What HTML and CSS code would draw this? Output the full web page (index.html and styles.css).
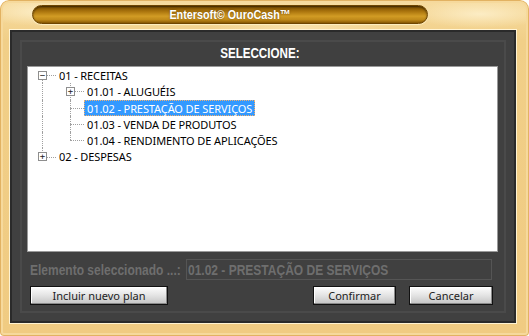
FILE: index.html
```html
<!DOCTYPE html>
<html lang="pt">
<head>
    <meta charset="UTF-8">
    <title>Entersoft© OuroCash™</title>
    <link rel="stylesheet" href="styles.css">
</head>
<body>
    <div class="window">
        <div class="titlebar"><span class="narrow">Entersoft© OuroCash™</span></div>

        <div class="panel">
            <div class="group">
                <div class="heading"><span class="narrow">SELECCIONE:</span></div>

                <div class="tree">
                    <div class="row">
                        <span class="cell first"><span class="exp">&minus;</span></span>
                        <span class="label">01 - RECEITAS</span>
                    </div>
                    <div class="row">
                        <span class="cell pipe"></span>
                        <span class="cell tee"><span class="exp">+</span></span>
                        <span class="label">01.01 - ALUGUÉIS</span>
                    </div>
                    <div class="row">
                        <span class="cell pipe"></span>
                        <span class="cell tee"></span>
                        <span class="label selected">01.02 - PRESTAÇÃO DE SERVIÇOS</span>
                    </div>
                    <div class="row">
                        <span class="cell pipe"></span>
                        <span class="cell tee"></span>
                        <span class="label">01.03 - VENDA DE PRODUTOS</span>
                    </div>
                    <div class="row">
                        <span class="cell pipe"></span>
                        <span class="cell elbow"></span>
                        <span class="label">01.04 - RENDIMENTO DE APLICAÇÕES</span>
                    </div>
                    <div class="row">
                        <span class="cell elbow"><span class="exp">+</span></span>
                        <span class="label">02 - DESPESAS</span>
                    </div>
                </div>

                <div class="selected-row">
                    <div class="sel-label"><span class="narrow">Elemento seleccionado ...:</span></div>
                    <div class="sel-value"><span class="narrow">01.02 - PRESTAÇÃO DE SERVIÇOS</span></div>
                </div>

                <div class="actions">
                    <button class="btn btn-wide">Incluir nuevo plan</button>
                    <span class="spacer"></span>
                    <button class="btn">Confirmar</button>
                    <button class="btn">Cancelar</button>
                </div>
            </div>
        </div>
    </div>
</body>
</html>
```

FILE: styles.css
```css
body {
    margin: 0;
    background: #fff;
}
/* condensed look of the original skin font */
.narrow {
    display: inline-block;
    transform: scaleX(0.83);
    white-space: nowrap;
}
.window {
    width: 529px;
    height: 336px;
    box-sizing: border-box;
    padding: 5px 0 0 10px;
    border-radius: 9px 9px 4px 4px;
    background:
        radial-gradient(ellipse 60px 14px at 40px 12px, rgba(255, 245, 215, 0.7), transparent),
        radial-gradient(ellipse 70px 14px at 480px 14px, rgba(255, 245, 215, 0.7), transparent),
        radial-gradient(ellipse 90px 10px at 300px 28px, rgba(255, 240, 200, 0.5), transparent),
        linear-gradient(#f7dca0, #f1cf88 40px, #f0cb82);
    box-shadow: inset 0 0 0 1px #e2b262, inset 0 0 0 3px #f6d99c;
}
.titlebar {
    width: 396px;
    height: 19px;
    box-sizing: border-box;
    margin-left: 22px;
    border: 1px solid #6e4500;
    border-radius: 10px;
    background: linear-gradient(#744900, #a8720c 30%, #d29c24 60%, #c08a1a 80%, #8a5a04);
    box-shadow: 0 1px 1px #fff0c4, inset 0 1px 2px rgba(0, 0, 0, 0.5);
    color: #fff;
    font-family: "Liberation Sans", Arial, sans-serif;
    font-weight: bold;
    font-size: 13px;
    line-height: 17px;
    text-align: center;
    text-shadow: 0 0 2px rgba(60, 35, 0, 0.6);
}
.panel {
    width: 506px;
    height: 293px;
    box-sizing: border-box;
    margin-top: 6px;
    padding: 8px;
    background: #404040;
    border: 2px solid #2a2a2a;
    box-shadow: 0 0 0 1px #fff3d2;
}
.group {
    width: 486px;
    height: 273px;
    box-sizing: border-box;
    border: 2px solid #4a4a4a;
    padding: 0 11px 0 5px;
}
.heading {
    height: 24px;
    line-height: 23px;
    text-align: center;
    color: #fff;
    font-family: "Liberation Sans", Arial, sans-serif;
    font-weight: bold;
    font-size: 14px;
}
.tree {
    width: 471px;
    height: 186px;
    box-sizing: border-box;
    background: #fff;
    border: 1px solid #9a9a9a;
    font-family: "Noto Sans", "DejaVu Sans", sans-serif;
    font-size: 11px;
    letter-spacing: -0.1px;
    color: #000;
}
.row {
    display: flex;
    height: 16.3px;
    align-items: stretch;
}
.cell {
    position: relative;
    width: 28px;
    flex: none;
    display: flex;
    align-items: center;
    justify-content: center;
}
/* connector lines */
.cell::before,
.cell::after {
    content: "";
    position: absolute;
}
.tee::before,
.first::before,
.elbow::before {
    left: 14px;
    right: 0;
    top: 50%;
    border-top: 1px dotted #a0a0a0;
}
.pipe::after,
.tee::after {
    left: 14px;
    top: 0;
    bottom: 0;
    border-left: 1px dotted #a0a0a0;
}
.first::after {
    left: 14px;
    top: 50%;
    bottom: 0;
    border-left: 1px dotted #a0a0a0;
}
.elbow::after {
    left: 14px;
    top: 0;
    height: 50%;
    border-left: 1px dotted #a0a0a0;
}
.exp {
    position: relative;
    z-index: 1;
    width: 9px;
    height: 9px;
    box-sizing: border-box;
    margin-left: 1px;
    border: 1px solid #8e8e8e;
    background: #fff;
    font-family: "DejaVu Sans Mono", monospace;
    font-size: 9px;
    line-height: 7px;
    text-align: center;
    color: #222;
}
.label {
    padding: 0 2px;
    line-height: 15px;
    border: 1px solid transparent;
    white-space: nowrap;
}
.label.selected {
    background: #3399ff;
    color: #fff;
    border: 1px dotted #f0b070;
}
.selected-row {
    display: flex;
    align-items: center;
    margin-top: 7px;
    height: 21px;
}
.sel-label,
.sel-value {
    color: #6e6e6e;
    font-family: "Liberation Sans", Arial, sans-serif;
    font-weight: bold;
    font-size: 15px;
    white-space: nowrap;
}
.sel-label {
    width: 156px;
    margin-left: 3px;
}
.sel-value {
    width: 306px;
    height: 21px;
    box-sizing: border-box;
    padding-left: 1px;
    border: 1px solid #555;
    line-height: 19px;
}
.sel-label .narrow,
.sel-value .narrow {
    transform: scaleX(0.8);
    transform-origin: left center;
}
.actions {
    display: flex;
    gap: 13px;
    margin-top: 6px;
    padding-left: 3px;
}
.spacer {
    flex: 1;
}
.btn {
    width: 83px;
    height: 19px;
    padding: 0;
    border: 1px solid #111;
    background: linear-gradient(#fdfdfd, #e6e6e6 45%, #c4c4c4);
    box-shadow: inset -1px -1px 0 #8a8a8a, inset 1px 1px 0 #fff;
    font-family: "Noto Sans", "DejaVu Sans", sans-serif;
    font-size: 11px;
    color: #222;
}
.btn:last-child {
    width: 84px;
}
.btn-wide {
    width: 138px;
}
```
